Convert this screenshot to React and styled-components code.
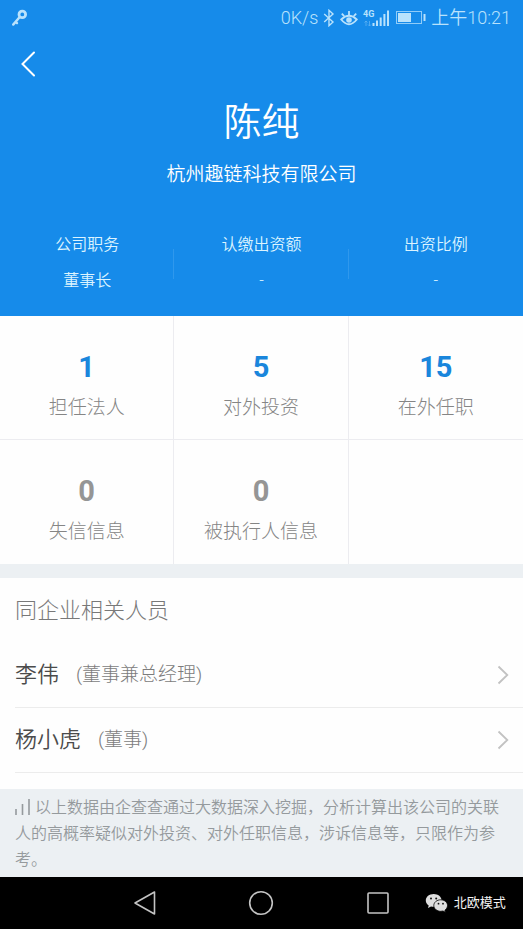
import React from "react";
import styled, { createGlobalStyle } from "styled-components";

const GlobalStyle = createGlobalStyle`
  *, *::before, *::after { box-sizing: border-box; }
  body {
    margin: 0;
    background: #fefefe;
    font-family: Roboto, "Noto Sans CJK SC", sans-serif;
    font-weight: 400;
  }
  h1, h2, p, dl, dt, dd, ul { margin: 0; padding: 0; font-weight: inherit; }
  ul { list-style: none; }
  button { border: 0; padding: 0; background: none; font: inherit; color: inherit; cursor: pointer; }
  svg { display: block; flex: none; }
`;

const Screen = styled.div`
  display: flex;
  flex-direction: column;
  min-height: 100vh;
`;

const Header = styled.header`
  background: #168bea;
  color: #fff;
  font-weight: 350;
`;

const StatusBar = styled.div`
  display: flex;
  align-items: center;
  justify-content: space-between;
  height: 36px;
  padding: 0 12px 0 11px;
  color: #b9e2fc;
  font-size: 18px;
  line-height: 20px;
`;

const StatusGroup = styled.div`
  display: flex;
  align-items: center;
  gap: 5px;
`;

const TitleBar = styled.nav`
  display: flex;
  height: 57px;
  padding: 0 12px;
`;

const BackButton = styled.button`
  display: grid;
  place-items: center;
  width: 32px;
  height: 56px;
`;

const Profile = styled.div`
  display: flex;
  flex-direction: column;
  align-items: center;
  gap: 10px;
  padding-bottom: 44px;
`;

const PersonName = styled.h1`
  font-size: 38px;
  line-height: 58px;
`;

const Company = styled.p`
  font-size: 19px;
  line-height: 28px;
`;

const Facts = styled.dl`
  display: grid;
  grid-template-columns: repeat(3, 1fr);
  padding-bottom: 23px;
`;

const Fact = styled.div`
  display: flex;
  flex-direction: column;
  align-items: center;
  gap: 12px;
  font-size: 16px;
  line-height: 24px;
  color: #dcf4ff;
  background: linear-gradient(#2f98ed, #2f98ed) right 16px / 1px 30px no-repeat;
  &:last-child { background: none; }
`;

const Counts = styled.div`
  display: grid;
  grid-template-columns: repeat(3, 1fr);
  border-bottom: 14px solid #ecf0f3;
`;

const CountCell = styled.div`
  height: 124px;
  border-right: 1px solid #ececf0;
  border-bottom: 1px solid #ececf0;
  &:nth-child(3n) { border-right: 0; }
  &:nth-child(n + 4) { border-bottom: 0; }
`;

const CountButton = styled.button`
  display: flex;
  flex-direction: column;
  align-items: center;
  gap: 11px;
  width: 100%;
  height: 100%;
  padding-top: 35px;
`;

const CountValue = styled.span`
  font-size: 29px;
  font-weight: 700;
  line-height: 32px;
  color: ${(p) => (p.$active ? "#1a86dc" : "#959595")};
`;

const CountLabel = styled.span`
  font-size: 19px;
  font-weight: 300;
  line-height: 28px;
  color: #858585;
`;

const People = styled.section`
  padding-left: 15px;
`;

const SectionTitle = styled.h2`
  font-size: 22px;
  font-weight: 300;
  line-height: 65px;
  color: #787878;
`;

const PersonItem = styled.li`
  border-bottom: 1px solid #ececec;
`;

const PersonButton = styled.button`
  display: flex;
  align-items: center;
  gap: 17px;
  width: 100%;
  height: 64px;
  padding-right: 14px;
  text-align: left;
`;

const PersonLabel = styled.span`
  font-size: 22px;
  line-height: 32px;
  font-weight: 350;
  color: #4b4b4b;
`;

const PersonRole = styled.span`
  flex: 1;
  font-size: 19px;
  line-height: 32px;
  font-weight: 300;
  color: #7c7c7c;
`;

const Notice = styled.footer`
  flex: 1;
  margin-top: 16px;
  padding: 6px 15px 4px;
  background: #ecf0f3;
  color: #959a9d;
  font-size: 16px;
  font-weight: 350;
  line-height: 26px;
`;

const BarsIcon = styled.svg`
  && { display: inline-block; }
  margin-right: 4px;
  vertical-align: -2px;
`;

const SystemNav = styled.nav`
  display: grid;
  grid-template-columns: 3fr 4fr 4fr 4fr 3fr;
  align-items: center;
  height: 52px;
  background: #000;
  color: #c4c4c4;
`;

const NavSlot = styled.div`
  display: flex;
  justify-content: center;
  position: relative;
  grid-column: ${(p) => p.$column};
`;

const NavButton = styled.button`
  display: grid;
  place-items: center;
  width: 48px;
  height: 48px;
`;

const Watermark = styled.div`
  position: absolute;
  left: 50%;
  top: 50%;
  transform: translateY(-50%);
  margin-left: 47px;
  display: flex;
  align-items: center;
  gap: 6px;
  white-space: nowrap;
  font-size: 13px;
  line-height: 20px;
  color: #f4f4f4;
`;

const facts = [
  ["公司职务", "董事长"],
  ["认缴出资额", "-"],
  ["出资比例", "-"],
];

const counts = [
  ["1", "担任法人"],
  ["5", "对外投资"],
  ["15", "在外任职"],
  ["0", "失信信息"],
  ["0", "被执行人信息"],
];

const people = [
  ["李伟", "(董事兼总经理)"],
  ["杨小虎", "(董事)"],
];

const KeyIcon = () => (
  <svg width="17" height="18" viewBox="0 0 17 18" fill="none" stroke="currentColor" aria-hidden="true">
    <circle cx="11.3" cy="5.4" r="3.3" strokeWidth="2.8" />
    <path d="M8.5 8.3 2.2 15.6M4.6 12.8l1.4 1.3" strokeWidth="2.4" strokeLinecap="round" />
  </svg>
);

const BluetoothIcon = () => (
  <svg width="12" height="18" viewBox="0 0 12 18" fill="none" stroke="currentColor" strokeWidth="1.4" aria-hidden="true">
    <path d="M1.2 5 10 13 6 16.7V1.3L10 5 1.2 13" />
  </svg>
);

const EyeIcon = () => (
  <svg width="18" height="18" viewBox="0 0 18 18" fill="none" stroke="currentColor" strokeWidth="1.8" aria-hidden="true">
    <path d="M1.2 10.5Q9 3 16.8 10.5Q9 20 1.2 10.5Z" />
    <circle cx="9" cy="11" r="2.8" fill="currentColor" stroke="none" />
    <path d="M9 2v4M1.8 4.6l2.4 2.6M16.2 4.6l-2.400 2.6" />
  </svg>
);

const SignalIcon = () => (
  <svg width="28" height="18" viewBox="0 0 28 18" aria-hidden="true">
    <g fill="currentColor">
      <text x="0" y="8" fontFamily="Roboto, sans-serif" fontSize="9" fontWeight="700">4G</text>
      <path d="M9.5 14h2v3h-2zM13 11.5h2V17h-2zM16.7 8.5h2V17h-2zM20.4 5h2v12h-2zM24 1.5h2V17h-2z" />
    </g>
    <path d="M3 17v-5M1.5 13.5 3 12l1.5 1.5M6.5 12v5M5 15.5 6.5 17 8 15.5" fill="none" stroke="#5fb2f3" strokeWidth="0.8" />
  </svg>
);

const BatteryIcon = () => (
  <svg width="30" height="14" viewBox="0 0 30 14" aria-hidden="true">
    <rect x="0.5" y="0.5" width="25" height="12" fill="none" stroke="currentColor" strokeOpacity="0.75" />
    <rect x="2" y="2" width="13" height="9" fill="currentColor" />
    <rect x="27.5" y="3" width="2" height="7" fill="currentColor" />
  </svg>
);

const BackIcon = () => (
  <svg width="16" height="26" viewBox="0 0 16 26" fill="none" stroke="currentColor" strokeWidth="2" strokeLinecap="round" aria-hidden="true">
    <path d="M14 1.5 2.5 13 14 24.5" />
  </svg>
);

const ChevronIcon = () => (
  <svg width="12" height="20" viewBox="0 0 12 20" fill="none" stroke="#c2c2c2" strokeWidth="1.8" aria-hidden="true">
    <path d="M1.5 1.5 10.3 10 1.5 18.5" />
  </svg>
);

const WeChatIcon = () => (
  <svg width="23" height="20" viewBox="0 0 23 20" aria-hidden="true">
    <path d="M8.7 1C4.3 1 .8 3.8.8 7.4c0 2.1 1.1 3.8 2.9 5L3 14.9l3-1.5c.9.2 1.8.4 2.7.4C13 13.8 16.6 11 16.6 7.4S13 1 8.7 1Z" fill="#dedede" />
    <path d="M15.7 6.8c-3.8 0-6.9 2.5-6.9 5.7s3.1 5.8 6.9 5.8c.8 0 1.6-.1 2.3-.3l2.5 1.3-.6-2.1c1.5-1.1 2.6-2.7 2.6-4.7 0-3.2-3-5.7-6.8-5.7Z" fill="#dedede" stroke="#000" strokeWidth="0.8" />
    <g fill="#111">
      <circle cx="6" cy="5.4" r="1" />
      <circle cx="11.2" cy="5.4" r="1" />
      <circle cx="13.5" cy="10.7" r="0.9" />
      <circle cx="18" cy="10.7" r="0.9" />
    </g>
  </svg>
);

export default function App() {
  return (
    <Screen>
      <GlobalStyle />
      <Header>
        <StatusBar>
          <KeyIcon />
          <StatusGroup>
            <span>0K/s</span>
            <BluetoothIcon />
            <EyeIcon />
            <SignalIcon />
            <BatteryIcon />
            <span>上午10:21</span>
          </StatusGroup>
        </StatusBar>
        <TitleBar>
          <BackButton type="button" aria-label="返回"><BackIcon /></BackButton>
        </TitleBar>
        <Profile>
          <PersonName>陈纯</PersonName>
          <Company>杭州趣链科技有限公司</Company>
        </Profile>
        <Facts>
          {facts.map(([label, value]) => (
            <Fact key={label}>
              <dt>{label}</dt>
              <dd>{value}</dd>
            </Fact>
          ))}
        </Facts>
      </Header>
      <Counts>
        {counts.map(([value, label]) => (
          <CountCell key={label}>
            <CountButton type="button">
              <CountValue $active={value !== "0"}>{value}</CountValue>
              <CountLabel>{label}</CountLabel>
            </CountButton>
          </CountCell>
        ))}
      </Counts>
      <People>
        <SectionTitle>同企业相关人员</SectionTitle>
        <ul>
          {people.map(([name, role]) => (
            <PersonItem key={name}>
              <PersonButton type="button">
                <PersonLabel>{name}</PersonLabel>
                <PersonRole>{role}</PersonRole>
                <ChevronIcon />
              </PersonButton>
            </PersonItem>
          ))}
        </ul>
      </People>
      <Notice>
        <BarsIcon width="16" height="16" viewBox="0 0 16 16" fill="none" stroke="currentColor" strokeWidth="1.6" aria-hidden="true">
          <path d="M1 16v-6M7.5 16V5M14 16V0" />
        </BarsIcon>
        以上数据由企查查通过大数据深入挖掘，分析计算出该公司的关联人的高概率疑似对外投资、对外任职信息，涉诉信息等，只限作为参考。
      </Notice>
      <SystemNav aria-label="系统导航">
        <NavSlot $column={2}>
          <NavButton type="button" aria-label="后退">
            <svg width="24" height="26" viewBox="0 0 24 26" fill="none" stroke="currentColor" strokeWidth="1.6" strokeLinejoin="round" aria-hidden="true">
              <path d="M21.5 2v22L2 13Z" />
            </svg>
          </NavButton>
        </NavSlot>
        <NavSlot $column={3}>
          <NavButton type="button" aria-label="主页">
            <svg width="26" height="26" viewBox="0 0 26 26" fill="none" stroke="currentColor" strokeWidth="1.6" aria-hidden="true">
              <circle cx="13" cy="13" r="11.3" />
            </svg>
          </NavButton>
        </NavSlot>
        <NavSlot $column={4}>
          <NavButton type="button" aria-label="最近任务">
            <svg width="24" height="24" viewBox="0 0 24 24" fill="none" stroke="currentColor" strokeWidth="1.6" aria-hidden="true">
              <rect x="2" y="2" width="20" height="20" rx="1" />
            </svg>
          </NavButton>
          <Watermark>
            <WeChatIcon />
            <span>北欧模式</span>
          </Watermark>
        </NavSlot>
      </SystemNav>
    </Screen>
  );
}
